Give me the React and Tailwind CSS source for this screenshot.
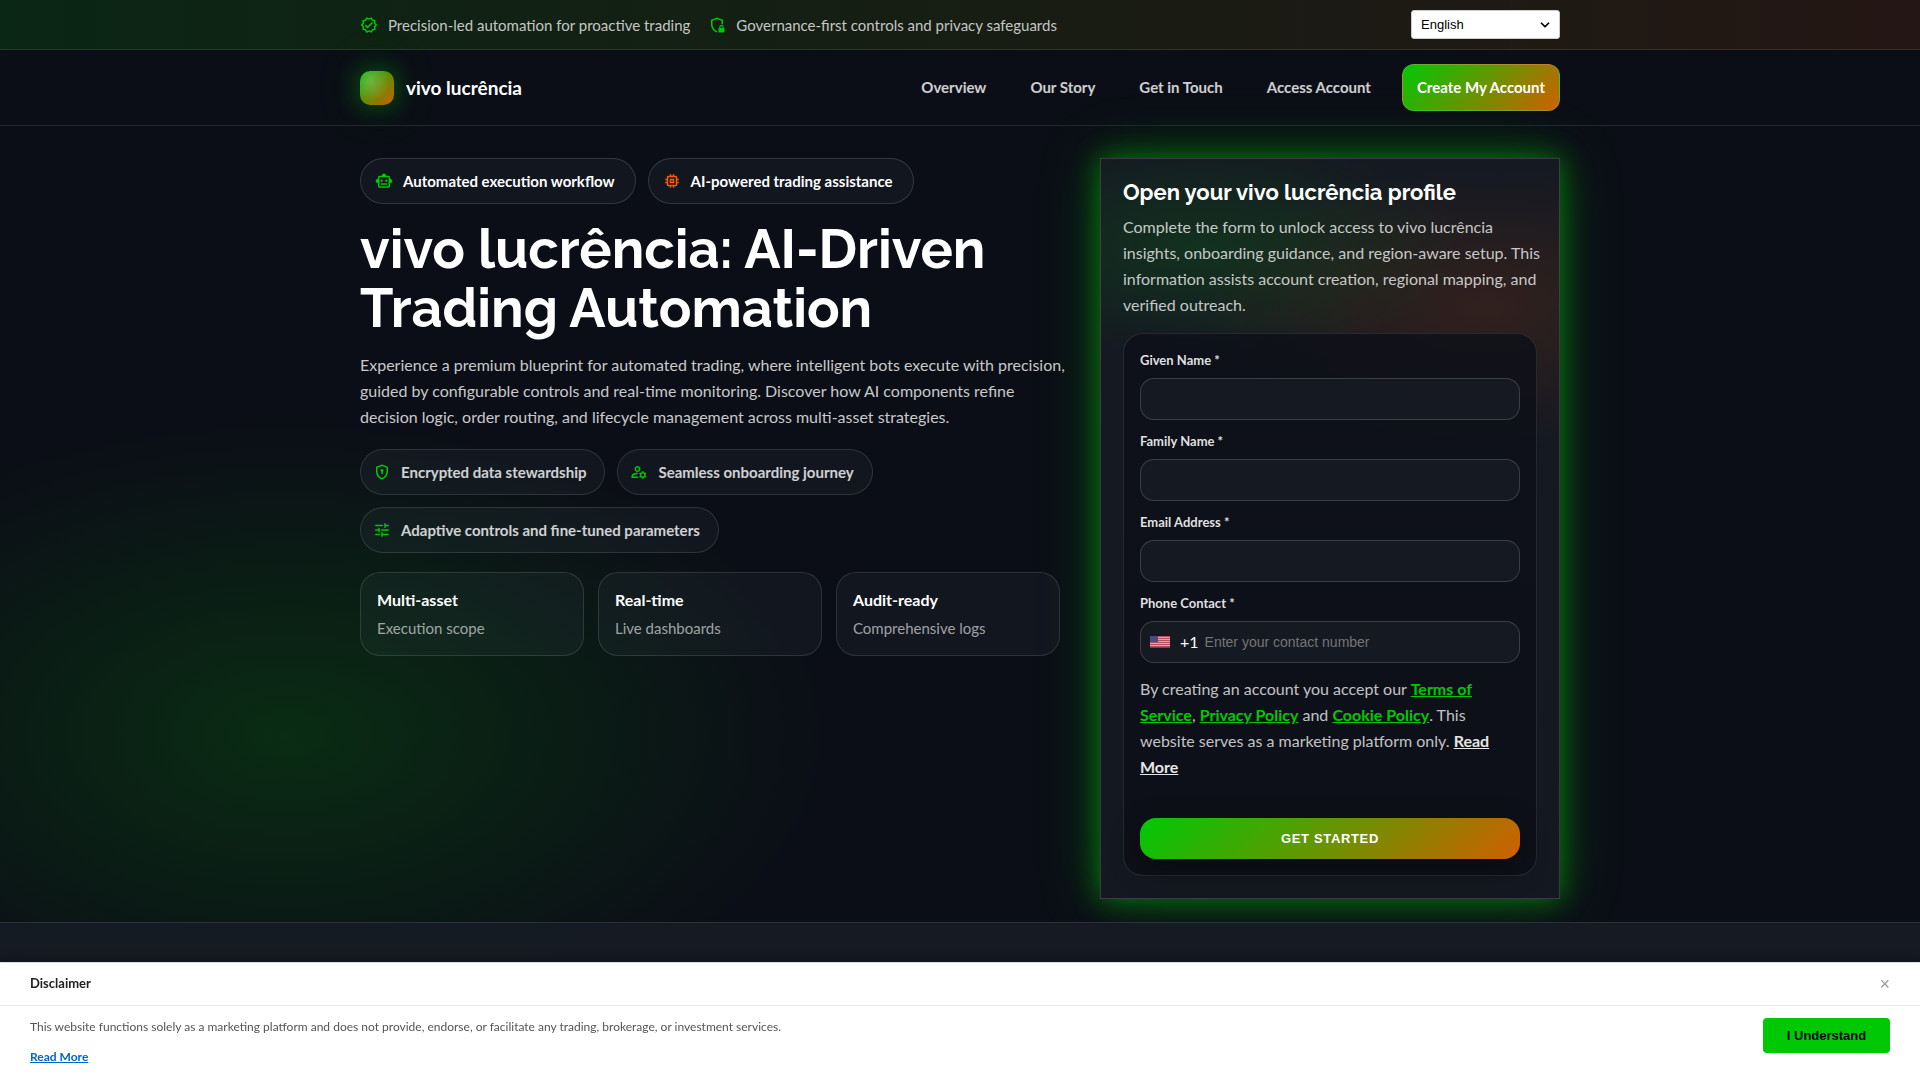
import React from 'react';
import { ChevronDown } from 'lucide-react';
import {
  MdOutlineVerified,
  MdOutlineSmartToy,
  MdMemory,
  MdOutlineManageAccounts,
  MdTune,
} from 'react-icons/md';

const ShieldLockIcon = ({ className }) => (
  <svg viewBox="0 0 24 24" fill="currentColor" className={className} aria-hidden="true">
    <path d="M12 22c-4.59-1.15-8-5.86-8-10.91V5l8-3 8 3v6h-2V6.39l-6-2.25-6 2.25v4.7c0 4.01 2.55 7.7 6 8.83z" />
    <path d="M15 22a1 1 0 0 1-1-1v-4a1 1 0 0 1 1-1v-1a3 3 0 0 1 6 0v1a1 1 0 0 1 1 1v4a1 1 0 0 1-1 1zm1.500-6h3v-1a1.500 1.500 0 0 0-3 0z" />
  </svg>
);

const ShieldKeyholeIcon = ({ className }) => (
  <svg viewBox="0 0 24 24" fill="currentColor" className={className} aria-hidden="true">
    <path d="M12 2 4 5v6.090c0 5.050 3.410 9.760 8 10.910 4.590-1.150 8-5.860 8-10.910V5zm6 9.090c0 4-2.550 7.700-6 8.830-3.450-1.130-6-4.820-6-8.830v-4.700l6-2.250 6 2.250z" />
    <path d="M12 8a2 2 0 0 0-1 3.730V15h2v-3.270A2 2 0 0 0 12 8z" />
  </svg>
);

const FlagUs = () => (
  <svg viewBox="0 0 20 12" className="w-5 h-3 opacity-80" role="img" aria-label="United States">
    <rect width="20" height="12" fill="#f5d5da" />
    {[0, 2, 4, 6, 8, 10].map((y) => (
      <rect key={y} y={y} width="20" height="1" fill="#d8606f" />
    ))}
    <rect y="11" width="20" height="1" fill="#d02f44" />
    <rect width="8" height="6" fill="#5a5a94" />
  </svg>
);

const navLinks = ['Overview', 'Our Story', 'Get in Touch', 'Access Account'];

const features = [
  { icon: ShieldKeyholeIcon, text: 'Encrypted data stewardship' },
  { icon: MdOutlineManageAccounts, text: 'Seamless onboarding journey' },
  { icon: MdTune, text: 'Adaptive controls and fine-tuned parameters' },
];

const stats = [
  { title: 'Multi-asset', text: 'Execution scope' },
  { title: 'Real-time', text: 'Live dashboards' },
  { title: 'Audit-ready', text: 'Comprehensive logs' },
];

const fields = [
  { id: 'given-name', label: 'Given Name *', type: 'text' },
  { id: 'family-name', label: 'Family Name *', type: 'text' },
  { id: 'email', label: 'Email Address *', type: 'email' },
];

const TopBar = () => (
  <div className="border-b border-white/10 bg-[linear-gradient(90deg,rgba(0,200,5,0.13),rgba(255,90,0,0.1))]">
    <div className="max-w-[1200px] mx-auto flex items-center justify-between py-[10px]">
      <div className="flex items-center gap-[18px] text-[15px] leading-6 text-white/75">
        <span className="flex items-center gap-[10px]">
          <MdOutlineVerified className="size-[18px] text-[#00c805]" />
          Precision-led automation for proactive trading
        </span>
        <span className="flex items-center gap-[10px]">
          <ShieldLockIcon className="size-[18px] text-[#00c805]" />
          Governance-first controls and privacy safeguards
        </span>
      </div>
      <div className="relative">
        <select
          aria-label="Language"
          className="block appearance-none w-[149px] h-[29px] px-[9px] rounded-[3px] border border-[#cccccc] bg-white text-black text-[13px] font-['Liberation_Sans',sans-serif]"
        >
          <option>English</option>
          <option>Português</option>
        </select>
        <ChevronDown className="absolute right-2 top-2 size-[14px] text-black pointer-events-none" strokeWidth={3} />
      </div>
    </div>
  </div>
);

const Header = () => (
  <header className="border-b border-white/10">
    <div className="max-w-[1200px] mx-auto flex items-center justify-between py-[14px]">
      <a href="#" className="flex items-center gap-3 text-[19px] leading-[34px] font-bold text-white">
        <span className="size-[34px] rounded-[10px] bg-[radial-gradient(circle_at_30%_30%,rgba(255,255,255,0.25),transparent_60%),linear-gradient(135deg,#00b805,#c85f00)] shadow-[0_0_24px_rgba(0,200,5,0.4),0_0_48px_rgba(0,200,5,0.2)]" />
        vivo lucrência
      </a>
      <nav className="flex items-center gap-[18px] text-[15px] font-bold">
        {navLinks.map((link) => (
          <a key={link} href="#" className="px-[13px] text-white/80">
            {link}
          </a>
        ))}
        <a
          href="#"
          className="h-[47px] px-[14px] flex items-center rounded-xl border border-white/15 text-white bg-[linear-gradient(135deg,#00c805,#d06000)]"
        >
          Create My Account
        </a>
      </nav>
    </div>
  </header>
);

const Intro = () => (
  <div className="flex-1 min-w-0">
    <div className="flex flex-wrap gap-3 text-[15px] leading-6 font-bold text-white">
      <span className="flex items-center gap-[10px] pl-[14px] pr-5 py-[10px] rounded-full border border-white/14 bg-[#5a6478]/10">
        <MdOutlineSmartToy className="size-[18px] text-[#00c805]" />
        Automated execution workflow
      </span>
      <span className="flex items-center gap-[10px] pl-[14px] pr-5 py-[10px] rounded-full border border-white/14 bg-[#5a6478]/10">
        <MdMemory className="size-[18px] text-[#ff5a00]" />
        AI-powered trading assistance
      </span>
    </div>

    <h1 className="mt-4 text-[54px] leading-[59px] font-bold text-white font-['Raleway','Lato',sans-serif]">
      vivo lucrência: AI-Driven Trading Automation
    </h1>
    <p className="mt-[14px] text-base leading-[26px] text-white/78 whitespace-nowrap">
      Experience a premium blueprint for automated trading, where intelligent bots execute with precision,
      <br />
      guided by configurable controls and real-time monitoring. Discover how AI components refine
      <br />
      decision logic, order routing, and lifecycle management across multi-asset strategies.
    </p>

    <ul className="mt-[19px] flex flex-wrap gap-3 text-[15px] leading-6 font-bold text-white/80">
      {features.map(({ icon: Icon, text }) => (
        <li
          key={text}
          className="flex items-center gap-[10px] pl-3 pr-[18px] py-[10px] rounded-full border border-white/12 bg-[#5a6478]/10"
        >
          <Icon className="size-[18px] text-[#00c805]" />
          {text}
        </li>
      ))}
    </ul>

    <div className="mt-[19px] grid grid-cols-3 gap-[14px]">
      {stats.map((stat) => (
        <div
          key={stat.title}
          className="px-4 py-[14px] flex flex-col gap-1 rounded-[20px] border border-white/12 bg-[#5a6478]/10"
        >
          <strong className="text-base leading-[25px] text-white">{stat.title}</strong>
          <span className="text-[15px] leading-[25px] text-white/60">{stat.text}</span>
        </div>
      ))}
    </div>
  </div>
);

const SignupForm = () => (
  <section className="w-[460px] shrink-0 px-[22px] pt-[18px] pb-[22px] border border-white/15 bg-[radial-gradient(380px_160px_at_22%_12%,rgba(0,200,5,0.14),transparent_70%),radial-gradient(420px_200px_at_84%_20%,rgba(255,90,0,0.12),transparent_70%),linear-gradient(#151922,#141820)] shadow-[0_0_24px_rgba(0,200,5,0.5),0_0_56px_rgba(0,200,5,0.3)]">
    <h2 className="text-[22px] leading-[30px] font-bold text-white font-['Raleway','Lato',sans-serif]">
      Open your vivo lucrência profile
    </h2>
    <p className="mt-[7px] text-base leading-[26px] text-white/75 whitespace-nowrap">
      Complete the form to unlock access to vivo lucrência
      <br />
      insights, onboarding guidance, and region-aware setup. This
      <br />
      information assists account creation, regional mapping, and
      <br />
      verified outreach.
    </p>

    <form className="mt-[15px] px-4 py-4 rounded-[20px] border border-white/10 bg-[#0d0f18]/80">
      <div className="flex flex-col gap-[11px]">
        {fields.map((field) => (
          <div key={field.id} className="flex flex-col gap-[7px]">
            <label htmlFor={field.id} className="text-[13px] leading-[21px] font-bold text-white/88">
              {field.label}
            </label>
            <input
              id={field.id}
              type={field.type}
              className="h-[42px] px-3 rounded-[14px] border border-white/16 bg-[#1b212b]/50 text-sm text-white"
            />
          </div>
        ))}
        <div className="flex flex-col gap-[7px]">
          <label htmlFor="phone" className="text-[13px] leading-[21px] font-bold text-white/88">
            Phone Contact *
          </label>
          <div className="h-[42px] px-[9px] flex items-center rounded-[14px] border border-white/16 bg-[#1b212b]/50">
            <FlagUs />
            <span className="ml-[10px] text-base text-white">+1</span>
            <input
              id="phone"
              type="tel"
              placeholder="Enter your contact number"
              className="ml-[6px] flex-1 h-full bg-transparent text-sm text-white placeholder:text-[#757575] font-['Liberation_Sans',sans-serif]"
            />
          </div>
        </div>
      </div>

      <p className="mt-[13px] text-base leading-[26px] text-white/75">
        By creating an account you accept our{' '}
        <a href="#" className="font-bold underline text-[#00c805]">Terms of Service</a>,{' '}
        <a href="#" className="font-bold underline text-[#00c805]">Privacy Policy</a> and{' '}
        <a href="#" className="font-bold underline text-[#00c805]">Cookie Policy</a>. This website serves as a marketing
        platform only.{' '}
        <a href="#" className="font-bold underline text-white/90">Read More</a>
      </p>

      <button
        type="button"
        className="mt-[38px] w-full h-[41px] rounded-2xl text-[13px] font-bold tracking-wider text-white font-['Liberation_Sans',sans-serif] bg-[linear-gradient(135deg,#00c805,#d06000)] shadow-[0_10px_30px_rgba(0,0,0,0.35)]"
      >
        GET STARTED
      </button>
    </form>
  </section>
);

const Disclaimer = () => (
  <div className="fixed inset-x-0 bottom-0 h-[118px] border-t border-[#dddddd] bg-white shadow-[0_-2px_10px_rgba(0,0,0,0.3)]">
    <div className="h-[43px] px-[30px] flex items-center justify-between border-b border-[#e8e8e8]">
      <h3 className="text-[13px] font-bold text-[#222222]">Disclaimer</h3>
      <button type="button" aria-label="Close" className="text-lg leading-none text-[#999999] font-['Liberation_Sans',sans-serif]">
        ×
      </button>
    </div>
    <div className="px-[30px] pt-3 flex items-start justify-between">
      <div className="text-xs leading-[18px] text-[#555555]">
        <p>
          This website functions solely as a marketing platform and does not provide, endorse, or facilitate any trading,
          brokerage, or investment services.
        </p>
        <a href="#" className="mt-3 inline-block font-bold underline text-[#0066cc]">
          Read More
        </a>
      </div>
      <button
        type="button"
        className="w-[127px] h-[35px] rounded bg-[#00c805] text-[13px] font-bold text-black font-['Liberation_Sans',sans-serif]"
      >
        I Understand
      </button>
    </div>
  </div>
);

const App = () => {
  return (
    <div className="min-h-screen flex flex-col font-['Lato',sans-serif] bg-[#0b0e16] bg-[radial-gradient(900px_520px_at_15%_68%,rgba(0,200,5,0.16),transparent_60%)]">
      <TopBar />
      <Header />
      <main className="flex-1 flex flex-col">
        <div className="w-full max-w-[1200px] mx-auto flex items-start gap-10 pt-8 pb-[23px]">
          <Intro />
          <SignupForm />
        </div>
        <section className="flex-1 border-t border-white/10 bg-[#161b24]/95" />
      </main>
      <Disclaimer />
    </div>
  );
};

export default App;
